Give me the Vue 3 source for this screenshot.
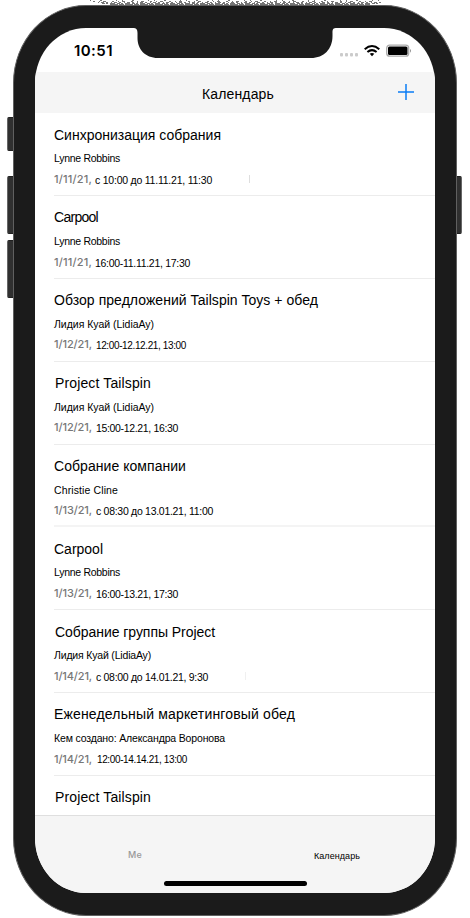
<script setup>
const events = [
  { title: 'Синхронизация собрания', tw: 167, who: 'Lynne Robbins', ww: 66, date: '1/11/21,', time: 'с 10:00 до 11.11.21, 11:30', mw: 117, gap: 4, tick: 'dark', low: true },
  { title: 'Carpool', tw: 44, who: 'Lynne Robbins', ww: 66, date: '1/11/21,', time: '16:00-11.11.21, 17:30', mw: 95, gap: 4 },
  { title: 'Обзор предложений Tailspin Toys + обед', tw: 264, who: 'Лидия Куай (LidiaAy)', ww: 100, date: '1/12/21,', time: '12:00-12.12.21, 13:00', mw: 90, gap: 5, small: true, early: true },
  { title: 'Project Tailspin', tw: 96, inset: true, who: 'Лидия Куай (LidiaAy)', ww: 100, date: '1/12/21,', time: '15:00-12.21, 16:30', mw: 82, gap: 5, early: true },
  { title: 'Собрание компании', tw: 132, who: 'Christie Cline', ww: 64, date: '1/13/21,', time: 'с 08:30 до 13.01.21, 11:00', mw: 117, gap: 5, short: true, early: true },
  { title: 'Carpool', tw: 49, who: 'Lynne Robbins', ww: 66, date: '1/13/21,', time: '16:00-13.21, 17:30', mw: 82, gap: 5, low: true },
  { title: 'Собрание группы Project', tw: 160, inset: true, who: 'Лидия Куай (LidiaAy)', ww: 97, date: '1/14/21,', time: 'с 08:00 до 14.01.21, 9:30', mw: 112, gap: 5, tick: 'light', low: true },
  { title: 'Еженедельный маркетинговый обед', tw: 241, who: 'Кем создано: Александра Воронова', ww: 171, date: '1/14/21,', time: '12:00-14.14.21, 13:00', mw: 90, gap: 6, small: true },
  { title: 'Project Tailspin', tw: 96, inset: true }
]

// Spreads the letters so that the label takes the given width.
const vFit = {
  mounted(el, { value }) {
    const natural = el.getBoundingClientRect().width
    const count = el.textContent.length
    el.style.letterSpacing = `${(value - natural) / count}px`
  }
}
</script>

<template>
  <main class="stage">
    <svg class="grain" width="300" height="5" viewBox="0 0 300 5" fill="none" stroke="#777">
      <path d="M0 .5H290" stroke-dasharray="1 9 2 14 1 5" />
      <path d="M3 1.5H285" stroke-dasharray="2 4 1 3 3 6" />
      <path d="M8 2.5H293" stroke-dasharray="1 2 3 2 2 3" />
      <path d="M12 3.5H290" stroke-dasharray="3 1 2 2 5 2" />
      <path d="M20 4.5H280" stroke-dasharray="8 1 5 1" />
    </svg>
    <i class="key mute"></i>
    <i class="key up"></i>
    <i class="key down"></i>
    <i class="key power"></i>
    <div class="phone">
      <div class="screen">
        <svg class="notch" width="204" height="31" viewBox="0 0 204 31">
          <path d="M0 0H204V1C200 1 199.500 2 199.500 6V9C199.500 22 191 31 178 31H25C12 31 4.500 22 4.500 11V6C4.500 2 3 1 0 1Z" fill="#1b1b1b" />
        </svg>
        <div class="status">
          <span class="clock"><span v-fit="39">10:51</span></span>
          <svg class="signals" width="74" height="16" viewBox="0 0 74 16">
            <g fill="#cbcbcb">
              <rect x="1" y="9" width="3" height="3.500" rx="1" />
              <rect x="6" y="9" width="3" height="3.500" rx="1" />
              <rect x="11" y="9" width="3" height="3.500" rx="1" />
              <rect x="16" y="9" width="3" height="3.500" rx="1" />
            </g>
            <g fill="none" stroke="#000" stroke-width="2">
              <path d="M25.700 5.200Q33 -1.200 40.300 5.200" />
              <path d="M28.400 8Q33 4.200 37.600 8" />
            </g>
            <path d="M30.700 9.700Q33 8.100 35.300 9.700L33 12.200Z" fill="#000" />
            <rect x="47.700" y="1.200" width="22" height="11" rx="3" fill="#fff" stroke="#aaa" stroke-width="1.300" />
            <rect x="49" y="2.500" width="19.500" height="8.500" rx="1.500" fill="#000" />
            <path d="M71 5Q73.200 6.700 71 8.700Z" fill="#999" />
          </svg>
        </div>
        <header class="bar">
          <h1><span v-fit="72">Календарь</span></h1>
          <svg class="plus" width="16" height="16" viewBox="0 0 16 16">
            <path d="M8 0V16M0 8H16" fill="none" stroke="#0a7cf5" stroke-width="1.500" />
          </svg>
        </header>
        <ul class="list">
          <li v-for="(e, i) in events" :key="i" class="row" :class="{ short: e.short, low: e.low }">
            <div class="title" :class="{ inset: e.inset }"><span v-fit="e.tw">{{ e.title }}</span></div>
            <template v-if="e.who">
              <div class="who"><span v-fit="e.ww">{{ e.who }}</span></div>
              <div class="when" :class="{ early: e.early }">
                <span class="date"><span v-fit="38">{{ e.date }}</span></span>
                <span class="time" :class="['gap' + e.gap, { small: e.small }]"><span v-fit="e.mw">{{ e.time }}</span></span>
                <i v-if="e.tick" class="tick" :class="e.tick"></i>
              </div>
            </template>
          </li>
        </ul>
        <nav class="tabs">
          <div class="tab me"><span v-fit="14">Me</span></div>
          <div class="tab active"><span v-fit="46">Календарь</span></div>
          <i class="home"></i>
        </nav>
      </div>
    </div>
  </main>
</template>

<style>
body {
  background: #fff;
  overflow: hidden;
}
</style>

<style scoped>
.stage {
  position: relative;
  box-sizing: border-box;
  width: 470px;
  height: 918px;
  padding: 5px 13px 2px;
  overflow: hidden;
  font-family: "Liberation Sans", Arial, sans-serif;
  color: #000;
}
.grain {
  position: absolute;
  left: 90px;
  top: 0;
}
.key {
  position: absolute;
  box-sizing: border-box;
  left: 7px;
  width: 8px;
  border: 1px solid #202020;
  border-left-color: #666;
  border-radius: 2px;
  background: #303030;
}
.mute { top: 117px; height: 34px; }
.up { top: 176px; height: 58px; }
.down { top: 240px; height: 58px; }
.power {
  left: 455px;
  top: 176px;
  height: 58px;
  width: 7px;
  border-left-color: #202020;
  border-right-color: #666;
}
.phone {
  position: relative;
  box-sizing: border-box;
  width: 444px;
  height: 911px;
  padding: 22px 21px 22px;
  border: 1px solid #606060;
  border-radius: 73px / 78px;
  background: #1b1b1b;
}
.screen {
  position: relative;
  display: flex;
  flex-direction: column;
  width: 400px;
  height: 865px;
  overflow: hidden;
  border-radius: 51px / 55px;
  background: #fff;
}
.notch {
  position: absolute;
  left: 98px;
  top: -1px;
}
.status {
  display: flex;
  flex: none;
  align-items: flex-start;
  justify-content: space-between;
  height: 44px;
  padding: 0 22px 0 39px;
  box-sizing: border-box;
}
.clock {
  margin-top: 14px;
  font: 600 15px/18px Inter, sans-serif;
  white-space: nowrap;
}
.signals { margin-top: 16px; }
.bar {
  display: flex;
  flex: none;
  align-items: center;
  box-sizing: border-box;
  height: 41px;
  padding: 0 21px 1px 167px;
  background: #f5f5f5;
}
.bar h1 {
  flex: 1;
  margin: 3px 0 0;
  font-size: 14px;
  line-height: 18px;
  font-weight: 400;
  white-space: nowrap;
}
.list {
  flex: 1;
  min-height: 0;
  margin: 0;
  padding: 0;
  overflow: hidden;
  list-style: none;
}
.row {
  box-sizing: border-box;
  height: 83px;
  margin-left: 19px;
  padding-top: 12px;
  border-bottom: 1px solid #ececec;
  white-space: nowrap;
}
.row.short {
  height: 82px;
  border-bottom: 2px solid #f4f4f4;
}
.title {
  height: 18px;
  font-size: 14px;
  line-height: 18px;
}
.low .title {
  padding-top: 1px;
  margin-bottom: -1px;
}
.title.inset { padding-left: 1px; }
.who {
  height: 14px;
  margin-top: 8px;
  font-size: 10.5px;
  line-height: 14px;
}
.when {
  display: flex;
  height: 16px;
  margin-top: 7px;
}
.date {
  width: 37px;
  color: #777;
  font: 500 11px/14px Inter, sans-serif;
}
.early .date { line-height: 12px; }
.time {
  width: 146px;
  font-size: 10.5px;
  line-height: 16px;
}
.early .time { line-height: 14px; }
.time.small {
  font-size: 10px;
  line-height: 16px;
}
.gap4 { margin-left: 4px; }
.gap5 { margin-left: 5px; }
.gap6 { margin-left: 6px; }
.tick {
  width: 1px;
  height: 8px;
  margin: 3px 0 0 8px;
  background: #dedede;
}
.tick.light {
  margin-left: 3px;
  background: #f0f0f0;
}
.tabs {
  position: relative;
  display: flex;
  flex: none;
  box-sizing: border-box;
  height: 78px;
  border-top: 1px solid #dfdfdf;
  background: #f5f5f5;
  white-space: nowrap;
}
.tab {
  box-sizing: border-box;
  width: 200px;
  font-size: 9px;
  line-height: 12px;
}
.me {
  padding: 33px 0 0 93px;
  color: #999;
  font-family: Inter, sans-serif;
  font-weight: 500;
}
.active { padding: 34px 0 0 79px; }
.home {
  position: absolute;
  left: 129px;
  bottom: 7px;
  width: 143px;
  height: 5px;
  border-radius: 3px;
  background: #000;
}
</style>
